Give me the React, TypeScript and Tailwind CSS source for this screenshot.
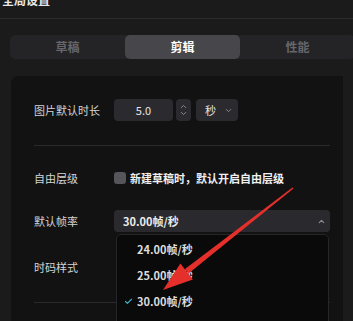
import { ChevronDown, ChevronUp, Check } from 'lucide-react'

const font = { fontFamily: '"Noto Sans CJK SC", "Liberation Sans", sans-serif' }

function Row({ label, children, className = '' }: { label: string; children?: React.ReactNode; className?: string }) {
  return (
    <div className={`flex h-[22px] items-center ${className}`}>
      <div className="w-[103px] shrink-0 whitespace-nowrap pl-[23px] text-[11px] text-[#d4d4d4]">{label}</div>
      {children}
    </div>
  )
}

export default function App() {
  return (
    <div className="relative h-[321px] w-[353px] overflow-hidden bg-[#1b1b1b]" style={font}>
      {/* title, cropped at the top */}
      <div className="h-[19px] overflow-hidden border-b border-[#2c2c2c] pl-[2px]">
        <div className="-mt-[7px] text-[12px] font-bold leading-[14px] text-[#e8e8e8]">全局设置</div>
      </div>

      {/* tabs */}
      <div className="ml-[10px] mt-[16px] grid h-[24px] w-[345px] grid-cols-3 rounded-[5px] bg-[#242427] text-[12px] font-bold">
        <div className="flex items-center justify-center text-[#66666b]">草稿</div>
        <div className="flex items-center justify-center rounded-[5px] bg-[#46464b] text-white">剪辑</div>
        <div className="flex items-center justify-center text-[#66666b]">性能</div>
      </div>

      {/* card */}
      <div className="relative ml-[11px] mt-[17px] h-[260px] w-[332px] rounded-tl-[8px] bg-[#121213] pt-[23px]">
        <Row label="图片默认时长">
          <div className="flex h-[22px] w-[59px] items-center justify-center rounded-[4px] bg-[#2b2b2f] text-[11px] text-[#e6e6e6]">
            5.0
          </div>
          <div className="ml-[3px] flex h-[22px] w-[15px] flex-col items-center justify-center rounded-[4px] bg-[#2b2b2f] text-[#8c8c90]">
            <ChevronUp size={9} strokeWidth={2.5} className="-mb-[1px]" />
            <ChevronDown size={9} strokeWidth={2.5} className="-mt-[1px]" />
          </div>
          <div className="ml-[5px] flex h-[22px] w-[42px] items-center justify-between rounded-[4px] bg-[#2b2b2f] pl-[9px] pr-[5px] text-[11px] text-[#e6e6e6]">
            秒
            <ChevronDown size={9} strokeWidth={2.5} className="text-[#8c8c90]" />
          </div>
        </Row>

        <div className="ml-[23px] mt-[24px] h-px w-[296px] bg-[#2a2a2c]" />

        <Row label="自由层级" className="mt-[21px]">
          <div className="h-[12px] w-[12px] rounded-[3px] bg-[#55555b]" />
          <div className="ml-[4px] whitespace-nowrap text-[11px] font-bold text-[#f0f0f0]">新建草稿时，默认开启自由层级</div>
        </Row>

        <Row label="默认帧率" className="mt-[21px]">
          <div className="flex h-[22px] w-[216px] items-center justify-between rounded-[4px] bg-[#2a2a2e] pl-[9px] pr-[4px] text-[11px] font-bold text-[#ececec]">
            30.00帧/秒
            <ChevronUp size={9} strokeWidth={3} className="text-[#8c8c90]" />
          </div>
        </Row>

        <Row label="时码样式" className="mt-[24px]" />

        <div className="ml-[23px] mt-[24px] h-px w-[296px] bg-[#2a2a2c]" />

        {/* open frame-rate menu */}
        <div className="absolute left-[105px] top-[158px] h-[120px] w-[213px] rounded-[5px] border border-[#262628] bg-[#0a0a0b] pt-px text-[11px] font-bold text-[#dcdcdc]">
          <div className="flex h-[26px] items-center pl-[20px]">24.00帧/秒</div>
          <div className="flex h-[26px] items-center pl-[20px]">25.00帧/秒</div>
          <div className="flex h-[26px] items-center">
            <Check size={9} strokeWidth={3} className="ml-[7px] mr-[4px] text-[#3ab4c4]" />
            30.00帧/秒
          </div>
        </div>
      </div>

      {/* red annotation arrow */}
      <svg className="pointer-events-none absolute left-0 top-0" width="353" height="321" viewBox="0 0 353 321">
        <polygon
          points="293.5,188.6 292.5,187.4 185,269 188.5,273.5"
          fill="#e52f2b"
        />
        <polygon points="163,290 180.4,263.6 192.8,279.4" fill="#e52f2b" />
      </svg>
    </div>
  )
}
